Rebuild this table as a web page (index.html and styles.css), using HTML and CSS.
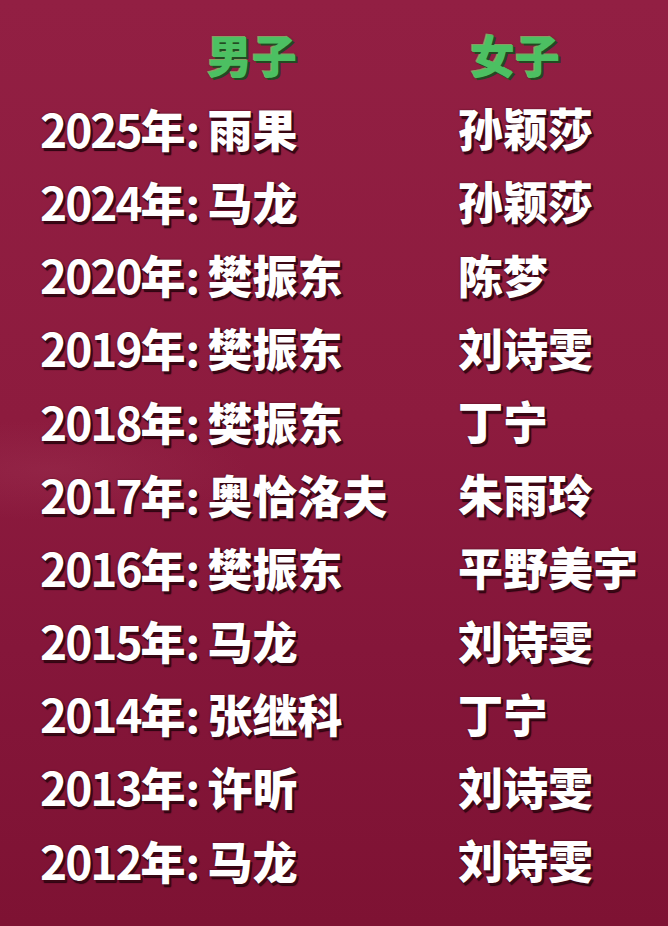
FILE: index.html
```html
<!DOCTYPE html>
<html lang="zh-CN">
<head>
<meta charset="utf-8">
<link rel="stylesheet" href="styles.css">
</head>
<body>
<main class="board">
  <div class="row head">
    <div class="cell men-h">男子</div>
    <div class="cell women-h">女子</div>
  </div>
  <div class="row"><div class="cell"><span class="num">2025</span>年<span class="colon">:</span> 雨果</div><div class="cell">孙颖莎</div></div>
  <div class="row"><div class="cell"><span class="num">2024</span>年<span class="colon">:</span> 马龙</div><div class="cell">孙颖莎</div></div>
  <div class="row"><div class="cell"><span class="num">2020</span>年<span class="colon">:</span> 樊振东</div><div class="cell">陈梦</div></div>
  <div class="row"><div class="cell"><span class="num">2019</span>年<span class="colon">:</span> 樊振东</div><div class="cell">刘诗雯</div></div>
  <div class="row"><div class="cell"><span class="num">2018</span>年<span class="colon">:</span> 樊振东</div><div class="cell">丁宁</div></div>
  <div class="row"><div class="cell"><span class="num">2017</span>年<span class="colon">:</span> 奥恰洛夫</div><div class="cell">朱雨玲</div></div>
  <div class="row"><div class="cell"><span class="num">2016</span>年<span class="colon">:</span> 樊振东</div><div class="cell">平野美宇</div></div>
  <div class="row"><div class="cell"><span class="num">2015</span>年<span class="colon">:</span> 马龙</div><div class="cell">刘诗雯</div></div>
  <div class="row"><div class="cell"><span class="num">2014</span>年<span class="colon">:</span> 张继科</div><div class="cell">丁宁</div></div>
  <div class="row"><div class="cell"><span class="num">2013</span>年<span class="colon">:</span> 许昕</div><div class="cell">刘诗雯</div></div>
  <div class="row"><div class="cell"><span class="num">2012</span>年<span class="colon">:</span> 马龙</div><div class="cell">刘诗雯</div></div>
</main>
</body>
</html>
```
FILE: styles.css
```css
html, body {
  margin: 0;
  padding: 0;
}
body {
  width: 668px;
  height: 926px;
  overflow: hidden;
  background:
    radial-gradient(ellipse 200px 50px at 50px 470px, rgba(180, 80, 110, 0.18), rgba(180, 80, 110, 0) 100%),
    linear-gradient(180deg, #921f43 0%, #8d1b3e 45%, #85163a 70%, #7e1233 100%);
  font-family: "Noto Sans CJK SC", "Noto Sans", sans-serif;
}
.board {
  padding-top: 18px;
  display: flex;
  flex-direction: column;
}
.row {
  display: grid;
  grid-template-columns: 418px 1fr;
  padding-left: 40px;
  height: 73.2px;
  align-items: center;
}
.cell {
  font-size: 45px;
  font-weight: 900;
  line-height: 1;
  color: #fff;
  white-space: nowrap;
  word-spacing: -3px;
  text-shadow: 2px 2px 0 #3a0714, 2px 3px 1px #2a0410, 0 0 2px rgba(40, 0, 12, 0.7);
}
.num {
  font-size: 46px;
  font-weight: 700;
  letter-spacing: -2px;
}
.colon {
  font-weight: 700;
}
.head .cell {
  color: #4cc062;
  text-shadow: 2px 2px 0 #234a22, -1px -1px 0 #8a9a62, 0 0 2px rgba(20, 40, 10, 0.7);
}
.men-h {
  padding-left: 167px;
}
.women-h {
  padding-left: 12px;
}
```
